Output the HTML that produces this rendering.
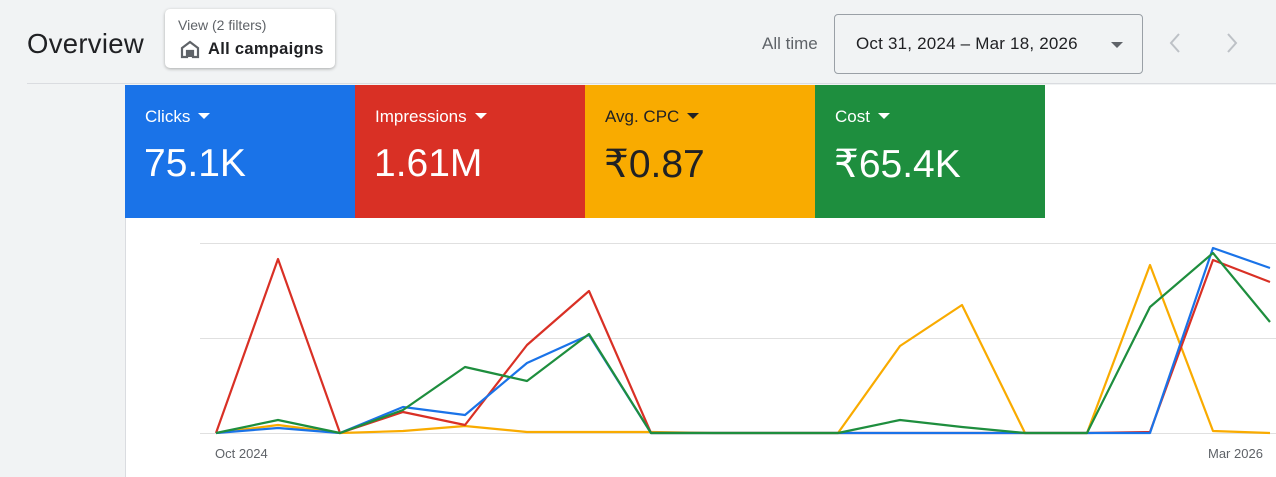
<!DOCTYPE html>
<html><head><meta charset="utf-8"><style>
body{margin:0;width:1276px;height:477px;background:#f1f3f4;font-family:"Liberation Sans",sans-serif;position:relative;overflow:hidden}
.a{position:absolute}
.card{position:absolute;top:85px;width:230px;height:133px;color:#fff}
.card .l{position:absolute;left:20px;top:22px;font-size:17px}
.card .v{position:absolute;left:19px;top:57px;font-size:39px}
.tri{display:inline-block;width:0;height:0;border-left:6px solid transparent;border-right:6px solid transparent;border-top:6px solid currentColor;vertical-align:middle;margin-left:8px;margin-top:-3px}
</style></head><body>
<div class="a" style="left:27px;top:28px;font-size:27.5px;color:#202124;letter-spacing:.3px">Overview</div>
<div class="a" style="left:165px;top:9px;width:170px;height:59px;background:#fff;border-radius:5px;box-shadow:0 1px 3px rgba(0,0,0,.3)">
<div class="a" style="left:13px;top:8px;font-size:14px;color:#5f6368">View (2 filters)</div>
<svg class="a" style="left:15px;top:30px" width="20" height="20" viewBox="0 0 20 20"><path d="M2 18V9L10 3L18 9V18H13V12H7V18Z" fill="none" stroke="#5f6368" stroke-width="2.2"/><rect x="7" y="12" width="6" height="6" fill="#5f6368"/></svg>
<div class="a" style="left:43px;top:31px;font-size:16.5px;color:#202124;font-weight:bold;letter-spacing:.3px">All campaigns</div>
</div>
<div class="a" style="left:762px;top:34px;font-size:17px;color:#5f6368">All time</div>
<div class="a" style="left:834px;top:14px;width:307px;height:58px;border:1px solid #9aa0a6;border-radius:4px">
<div class="a" style="left:21px;top:19px;font-size:17px;color:#202124;letter-spacing:.2px">Oct 31, 2024 – Mar 18, 2026</div>
<div class="a" style="left:276px;top:27px;border-left:6px solid transparent;border-right:6px solid transparent;border-top:6px solid #5f6368;width:0;height:0"></div>
</div>
<svg class="a" style="left:1160px;top:30px" width="90" height="26"><path d="M19 4L11 13L19 22" fill="none" stroke="#bdc1c6" stroke-width="2"/><path d="M68 4L76 13L68 22" fill="none" stroke="#bdc1c6" stroke-width="2"/></svg>
<div class="a" style="left:27px;top:83px;width:1249px;height:1px;background:#dadce0"></div>
<div class="a" style="left:125px;top:85px;width:1151px;height:392px;background:#fff;border-left:1px solid #dadce0"></div>
<div class="card" style="left:125px;background:#1a73e8"><div class="l">Clicks<span class="tri"></span></div><div class="v">75.1K</div></div>
<div class="card" style="left:355px;background:#d93025"><div class="l">Impressions<span class="tri"></span></div><div class="v">1.61M</div></div>
<div class="card" style="left:585px;background:#f9ab00;color:#202124"><div class="l">Avg. CPC<span class="tri"></span></div><div class="v">₹0.87</div></div>
<div class="card" style="left:815px;background:#1e8e3e"><div class="l">Cost<span class="tri"></span></div><div class="v">₹65.4K</div></div>
<svg class="a" style="left:0;top:0" width="1276" height="477">
<g stroke="#e0e0e0" stroke-width="1"><line x1="200" y1="243.5" x2="1276" y2="243.5"/><line x1="200" y1="338.5" x2="1276" y2="338.5"/><line x1="200" y1="433.5" x2="1276" y2="433.5"/></g>
<g fill="none" stroke-width="2.2" stroke-linejoin="round">
<polyline stroke="#f9ab00" points="216,433 278,425 340,433 403,431 465,426 527,432 589,432 651,432 713,433 775,433 838,433 900,346 962,305 1025,433 1087,433 1150,265 1213,431 1270,433"/>
<polyline stroke="#d93025" points="216,433 278,259 340,433 403,412 465,425 527,345 589,291 651,433 713,433 775,433 838,433 900,433 962,433 1025,433 1087,433 1150,432 1213,260 1270,282"/>
<polyline stroke="#1a73e8" points="216,433 278,428 340,433 403,407 465,415 527,363 589,335 651,433 713,433 775,433 838,433 900,433 962,433 1025,433 1087,433 1150,433 1213,248 1270,268"/>
<polyline stroke="#1e8e3e" points="216,433 278,420 340,433 403,410 465,367 527,381 589,334 651,433 713,433 775,433 838,433 900,420 962,427 1025,433 1087,433 1150,307 1213,253 1270,322"/>
</g>
<text x="215" y="458" font-size="13" fill="#5f6368" font-family="Liberation Sans">Oct 2024</text>
<text x="1208" y="458" font-size="13" fill="#5f6368" font-family="Liberation Sans">Mar 2026</text>
</svg>
</body></html>
